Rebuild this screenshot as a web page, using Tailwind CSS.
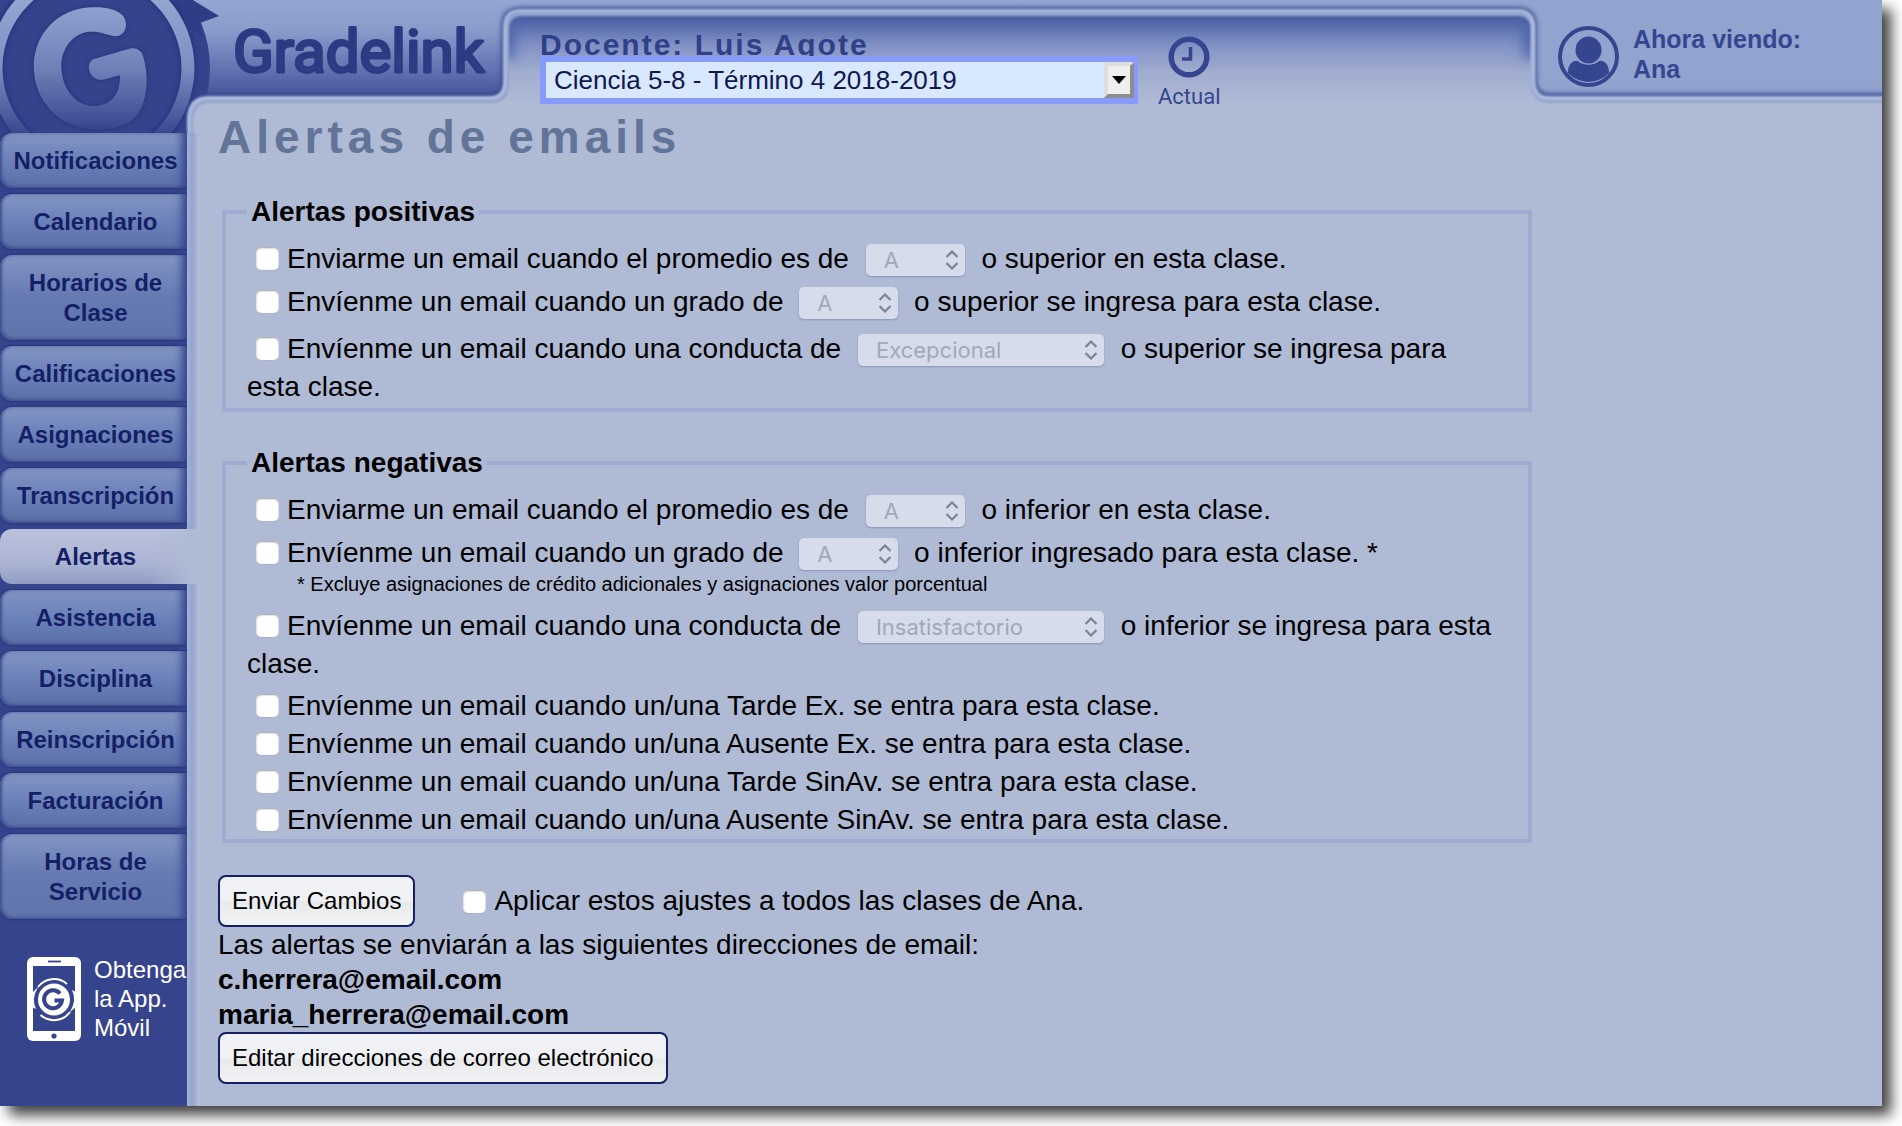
<!DOCTYPE html>
<html lang="es">
<head>
<meta charset="utf-8">
<title>Gradelink - Alertas de emails</title>
<script src="https://cdn.jsdelivr.net/npm/@tailwindcss/browser@4"></script>
</head>
<body class="bg-white font-['Liberation_Sans',Arial,sans-serif] text-black">
<div class="flex min-h-screen pr-5 pb-5">
<div class="relative flex flex-1 flex-col bg-[#afbad5] shadow-[9px_9px_13px_rgba(0,0,0,0.75)]">

  <!-- Header artwork: the left part stretches, the right end is fixed -->
  <div class="pointer-events-none absolute inset-x-0 top-0 z-10 flex h-[133px]" aria-hidden="true">
    <svg class="h-[133px] min-w-0 flex-1">
      <defs>
        <linearGradient id="hd" x1="0" y1="0" x2="0" y2="97" gradientUnits="userSpaceOnUse"><stop offset="0" stop-color="#94a6d1"/><stop offset=".3" stop-color="#8c9ccb"/><stop offset=".7" stop-color="#6473b2"/><stop offset="1" stop-color="#47539a"/></linearGradient>
        <linearGradient id="tab" x1="0" y1="12" x2="0" y2="104" gradientUnits="userSpaceOnUse"><stop offset="0" stop-color="#465c9f"/><stop offset=".1" stop-color="#5065a7"/><stop offset=".35" stop-color="#8090c4"/><stop offset=".65" stop-color="#a0adcf"/><stop offset="1" stop-color="#afbad5"/></linearGradient>
        <linearGradient id="ring" x1="0" y1="0" x2="0" y2="133" gradientUnits="userSpaceOnUse"><stop offset="0" stop-color="#94a6d1"/><stop offset=".5" stop-color="#7d8ec3"/><stop offset="1" stop-color="#3a4890"/></linearGradient>
        <linearGradient id="gl" x1="0" y1="20" x2="0" y2="390" gradientUnits="userSpaceOnUse"><stop offset="0" stop-color="#90a1cf"/><stop offset=".5" stop-color="#7080b8"/><stop offset="1" stop-color="#37458f"/></linearGradient>
        <linearGradient id="wm" x1="0" y1="0" x2="0" y2="1"><stop offset="0" stop-color="#27347c"/><stop offset="1" stop-color="#34438e"/></linearGradient>
        <filter id="b2" x="-20%" y="-20%" width="140%" height="140%"><feGaussianBlur stdDeviation="2.5"/></filter>
        <filter id="b8" filterUnits="userSpaceOnUse" x="-100" y="-60" width="800" height="600"><feGaussianBlur stdDeviation="7"/></filter>
        <filter id="b1" x="-20%" y="-20%" width="140%" height="140%"><feGaussianBlur stdDeviation="1"/></filter>
        <clipPath id="shape"><path d="M0 0H4000V11H520Q505 11 505 27V81Q505 97 490 97H208Q188 97 188 120V133H0Z"/></clipPath>
      </defs>
      <rect x="490" y="11" width="3500" height="93" fill="url(#tab)"/>
      <path d="M506 24V58" stroke="#3c5aa2" stroke-width="16" opacity=".8" filter="url(#b8)"/>
      <rect x="480" y="97" width="24" height="8" fill="#afbad5"/>
      <g clip-path="url(#shape)">
        <rect width="4000" height="97" fill="url(#hd)"/>
        <rect y="97" width="260" height="36" fill="#36448d"/>
        <path d="M4000 11H520Q505 11 505 27V81Q505 97 490 97H208Q188 97 188 120V133" fill="none" stroke="#34458f" stroke-width="7" filter="url(#b2)"/>
        <circle cx="92" cy="68" r="118" fill="#35438d"/>
        <path d="M160-20L219 16L200 23L204 38L176 20Z" fill="#2f3d86"/>
        <circle cx="92" cy="68" r="96" fill="none" stroke="#27357e" stroke-width="17" filter="url(#b2)"/>
        <circle cx="92" cy="68" r="96" fill="none" stroke="url(#ring)" stroke-width="13"/>
        <g transform="scale(.3444 .3333)">
          <path d="M330 108C300 100 285 94 262 95C215 97 182 140 178 190C176 260 215 318 272 318C322 316 350 285 348 226L295 240C262 242 245 195 270 178L375 146C400 140 412 155 416 170C436 240 425 310 395 350C370 380 320 390 272 388C170 385 97 300 98 195C100 100 170 25 265 22C300 20 335 25 355 45C378 72 362 114 330 108Z" fill="#212e72" filter="url(#b8)"/>
          <path d="M330 108C300 100 285 94 262 95C215 97 182 140 178 190C176 260 215 318 272 318C322 316 350 285 348 226L295 240C262 242 245 195 270 178L375 146C400 140 412 155 416 170C436 240 425 310 395 350C370 380 320 390 272 388C170 385 97 300 98 195C100 100 170 25 265 22C300 20 335 25 355 45C378 72 362 114 330 108Z" fill="url(#gl)"/>
        </g>
      </g>
      <text x="233" y="72" font-family="Roboto, sans-serif" font-size="60" font-weight="400" fill="url(#wm)" stroke="#2c3a83" stroke-width="3" stroke-linejoin="round">Gradelink</text>
      <path d="M4000 11H520Q505 11 505 27V81Q505 98 490 98H208Q189 98 189 120V133" fill="none" stroke="#93a4cd" stroke-width="4" filter="url(#b1)" transform="translate(2 3)"/>
      <path d="M4000 11H520Q505 11 505 27V81Q505 98 490 98H208Q189 98 189 120V133" fill="none" stroke="#a9b8db" stroke-width="4" filter="url(#b1)"/>
    </svg>
    <svg class="h-[133px] w-[409px] shrink-0" viewBox="0 0 409 133">
      <defs><clipPath id="rs"><path d="M-200 0H409V97H76Q60 97 60 79V27Q60 11 45 11H-200Z"/></clipPath></defs>
      <rect x="-10" y="11" width="86" height="93" fill="url(#tab)"/>
      <path d="M59 24V58" stroke="#3c5aa2" stroke-width="16" opacity=".8" filter="url(#b8)"/>
      <g clip-path="url(#rs)">
        <rect x="-10" width="430" height="97" fill="url(#hd)"/>
        <rect x="45" width="374" height="97" fill="#92a3cf"/>
        <path d="M-200 11H45Q60 11 60 27V79Q60 97 76 97H600" fill="none" stroke="#34458f" stroke-width="7" filter="url(#b2)"/>
      </g>
      <path d="M-200 11H45Q60 11 60 27V79Q60 98 76 98H600" fill="none" stroke="#93a4cd" stroke-width="4" filter="url(#b1)" transform="translate(0 3)"/>
      <path d="M-200 11H45Q60 11 60 27V79Q60 98 76 98H600" fill="none" stroke="#a9b8db" stroke-width="4" filter="url(#b1)"/>
    </svg>
  </div>

  <header class="relative z-20 flex h-[104px]">
    <div class="w-[540px] shrink-0"></div>
    <div class="w-[598px] pt-7">
      <div class="h-7 overflow-hidden text-[30px] leading-[34px] font-bold tracking-[2px] text-[#2f3f88]"><label for="clase">Docente: Luis Agote</label></div>
      <div class="relative">
        <select id="clase" class="block h-12 w-full appearance-none border-6 border-[#869bfb] bg-[#d8e8ff] pl-2 text-[26px] leading-8 text-[#10184f]"><option>Ciencia 5-8 - Término 4 2018-2019</option></select>
        <span class="pointer-events-none absolute top-1.5 right-1 flex h-9 w-[30px] items-center justify-center border-4 border-t-[#dedede] border-r-[#8e8e8e] border-b-[#8e8e8e] border-l-[#dedede] bg-[#efefef]"><svg class="h-2 w-3.5" viewBox="0 0 14 8"><path d="M0 0H14L7 8Z"/></svg></span>
      </div>
    </div>
    <a href="#" class="ml-5 flex flex-col items-center pt-9 text-[#36458f]">
      <svg class="h-[42px] w-[42px] shrink-0" viewBox="0 0 42 42" fill="none" stroke="currentColor"><circle cx="21" cy="21" r="17.800" stroke-width="5.500"/><path d="M22.500 11V23H14" stroke-width="3.500"/></svg>
      <span class="font-[Roboto] text-[22px] leading-[38px]">Actual</span>
    </a>
    <div class="ml-auto flex w-[324px] gap-3.5 pt-[26px] text-[#36458f]">
      <svg class="h-[61px] w-[61px]" viewBox="0 0 61 61"><circle cx="30.500" cy="30.500" r="28.500" fill="none" stroke="currentColor" stroke-width="4"/><ellipse cx="30.500" cy="24" rx="13" ry="13.500" fill="currentColor"/><path d="M10 47C10 38 15 34 20 35C25 40 36 40 41 35C46 34 51 38 51 47A28 28 0 0 1 10 47Z" fill="currentColor"/></svg>
      <div class="-mt-0.5 text-[25px] leading-[30px] font-bold">Ahora viendo:<br>Ana</div>
    </div>
  </header>

  <div class="flex flex-1">
    <aside class="w-[187px] shrink-0 bg-[#36448d] pt-[29px]">
      <nav class="flex flex-col gap-1.5 text-center text-2xl leading-[30px] font-bold text-[#141f66]">
        <a href="#" class="flex min-h-[55px] items-center justify-center rounded-l-xl bg-linear-to-b from-[#8395c3] via-[#6b81b9] to-[#5a6da6] pl-1 shadow-[inset_-9px_0_8px_-4px_#34448c,inset_2px_-1px_3px_#40508f,0_0_2px_1px_#28357b]">Notificaciones</a>
        <a href="#" class="flex min-h-[55px] items-center justify-center rounded-l-xl bg-linear-to-b from-[#8395c3] via-[#6b81b9] to-[#5a6da6] pl-1 shadow-[inset_-9px_0_8px_-4px_#34448c,inset_2px_-1px_3px_#40508f,0_0_2px_1px_#28357b]">Calendario</a>
        <a href="#" class="flex min-h-[85px] items-center justify-center rounded-l-xl bg-linear-to-b from-[#8395c3] via-[#6579b2] to-[#6074ac] pl-1 shadow-[inset_-9px_0_8px_-4px_#34448c,inset_2px_-1px_3px_#40508f,0_0_2px_1px_#28357b]">Horarios de<br>Clase</a>
        <a href="#" class="flex min-h-[55px] items-center justify-center rounded-l-xl bg-linear-to-b from-[#8395c3] via-[#6b81b9] to-[#5a6da6] pl-1 shadow-[inset_-9px_0_8px_-4px_#34448c,inset_2px_-1px_3px_#40508f,0_0_2px_1px_#28357b]">Calificaciones</a>
        <a href="#" class="flex min-h-[55px] items-center justify-center rounded-l-xl bg-linear-to-b from-[#8395c3] via-[#6b81b9] to-[#5a6da6] pl-1 shadow-[inset_-9px_0_8px_-4px_#34448c,inset_2px_-1px_3px_#40508f,0_0_2px_1px_#28357b]">Asignaciones</a>
        <a href="#" class="flex min-h-[55px] items-center justify-center rounded-l-xl bg-linear-to-b from-[#8395c3] via-[#6b81b9] to-[#5a6da6] pl-1 shadow-[inset_-9px_0_8px_-4px_#34448c,inset_2px_-1px_3px_#40508f,0_0_2px_1px_#28357b]">Transcripción</a>
        <a href="#" aria-current="page" class="relative z-30 -mr-3 flex min-h-[55px] items-center justify-center rounded-l-xl bg-[linear-gradient(90deg,transparent_75%,#afbad5_97%),linear-gradient(180deg,#b9c3dd,#abb5d3_60%,#919dc4)] pr-2">Alertas</a>
        <a href="#" class="flex min-h-[55px] items-center justify-center rounded-l-xl bg-linear-to-b from-[#8395c3] via-[#6b81b9] to-[#5a6da6] pl-1 shadow-[inset_-9px_0_8px_-4px_#34448c,inset_2px_-1px_3px_#40508f,0_0_2px_1px_#28357b]">Asistencia</a>
        <a href="#" class="flex min-h-[55px] items-center justify-center rounded-l-xl bg-linear-to-b from-[#8395c3] via-[#6b81b9] to-[#5a6da6] pl-1 shadow-[inset_-9px_0_8px_-4px_#34448c,inset_2px_-1px_3px_#40508f,0_0_2px_1px_#28357b]">Disciplina</a>
        <a href="#" class="flex min-h-[55px] items-center justify-center rounded-l-xl bg-linear-to-b from-[#8395c3] via-[#6b81b9] to-[#5a6da6] pl-1 shadow-[inset_-9px_0_8px_-4px_#34448c,inset_2px_-1px_3px_#40508f,0_0_2px_1px_#28357b]">Reinscripción</a>
        <a href="#" class="flex min-h-[55px] items-center justify-center rounded-l-xl bg-linear-to-b from-[#8395c3] via-[#6b81b9] to-[#5a6da6] pl-1 shadow-[inset_-9px_0_8px_-4px_#34448c,inset_2px_-1px_3px_#40508f,0_0_2px_1px_#28357b]">Facturación</a>
        <a href="#" class="flex min-h-[85px] items-center justify-center rounded-l-xl bg-linear-to-b from-[#8395c3] via-[#6579b2] to-[#6074ac] pl-1 shadow-[inset_-9px_0_8px_-4px_#34448c,inset_2px_-1px_3px_#40508f,0_0_2px_1px_#28357b]">Horas de<br>Servicio</a>
      </nav>
      <a href="#" class="mt-9 flex items-center gap-[13px] pl-[27px] text-2xl leading-[29px] text-white">
        <svg class="h-[84px] w-[54px] shrink-0" viewBox="0 0 54 84">
          <rect width="54" height="84" rx="6" fill="#fff"/><rect x="6" y="9" width="42" height="65" fill="#36448d"/>
          <path d="M21 4.500H34" stroke="#36448d" stroke-width="1.800"/><circle cx="27" cy="79" r="2.600" fill="#36448d"/>
          <circle cx="27" cy="42.500" r="16" fill="#fff"/>
          <path d="M11 30A20 20 0 0 1 40 27M13.500 58A20 20 0 0 0 43 55" fill="none" stroke="#fff" stroke-width="2"/>
          <path d="M11 30Q4 42 9 52L5 50V36ZM43 55Q50 43 45 33L49 35V50Z" fill="#fff"/>
          <path d="M33 36.500A9 9 0 1 0 35 43.500H27.500" fill="none" stroke="#36448d" stroke-width="4"/>
        </svg>
        <span>Obtenga<br>la App.<br>Móvil</span>
      </a>
    </aside>

    <main class="relative flex-1 bg-[linear-gradient(90deg,#a3b2d8_0,#94a4cc_5px,#9fadd1_8px,transparent_11px)] bg-[position:0_29px] bg-no-repeat px-[31px] pt-[9px] text-[28px] leading-[38px]">
      <h1 class="text-[46px] leading-12 font-bold tracking-[5px] text-[#627497]">Alertas de emails</h1>
      <form>
        <fieldset class="mt-8 ml-1 max-w-[1310px] border-4 border-[#9fabd1] pt-1.5 pr-8 pb-0.5 pl-[21px]">
          <legend class="px-1 text-[28px] font-bold">Alertas positivas</legend>
          <div class="leading-[43px]"><input id="p1" type="checkbox" class="mr-2 ml-[9px] inline-block h-[23px] w-[23px] appearance-none rounded-[5px] bg-white align-[-2px] shadow-[inset_0_1px_2px_#999,0_1px_1px_#9993]"><label for="p1">Enviarme un email cuando el promedio es de</label> <span class="relative mx-[9px] inline-block h-8 w-[99px] align-baseline leading-8"><select disabled aria-label="Promedio mínimo" class="block h-8 w-full appearance-none rounded-[5px] bg-[#d6dcea] px-[18px] font-[Inter] text-[22px] leading-8 text-[#a2a8b8] opacity-100 shadow-[0_1px_2px_#8a95b3]"><option>A</option></select><svg class="absolute top-1.5 right-1.5 h-5 w-3.5" viewBox="0 0 14 20" fill="none" stroke="#7c8393" stroke-width="2.200"><path d="M1.500 7L7 1.500L12.500 7M1.500 13L7 18.500L12.500 13"/></svg></span> o superior en esta clase.</div>
          <div class="leading-[43px]"><input id="p2" type="checkbox" class="mr-2 ml-[9px] inline-block h-[23px] w-[23px] appearance-none rounded-[5px] bg-white align-[-2px] shadow-[inset_0_1px_2px_#999,0_1px_1px_#9993]"><label for="p2">Envíenme un email cuando un grado de</label> <span class="relative mx-2 inline-block h-8 w-[99px] align-baseline leading-8"><select disabled aria-label="Grado mínimo" class="block h-8 w-full appearance-none rounded-[5px] bg-[#d6dcea] px-[18px] font-[Inter] text-[22px] leading-8 text-[#a2a8b8] opacity-100 shadow-[0_1px_2px_#8a95b3]"><option>A</option></select><svg class="absolute top-1.5 right-1.5 h-5 w-3.5" viewBox="0 0 14 20" fill="none" stroke="#7c8393" stroke-width="2.200"><path d="M1.500 7L7 1.500L12.500 7M1.500 13L7 18.500L12.500 13"/></svg></span> o superior se ingresa para esta clase.</div>
          <div class="pt-[7px]"><input id="p3" type="checkbox" class="mr-2 ml-[9px] inline-block h-[23px] w-[23px] appearance-none rounded-[5px] bg-white align-[-2px] shadow-[inset_0_1px_2px_#999,0_1px_1px_#9993]"><label for="p3">Envíenme un email cuando una conducta de</label> <span class="relative mx-[9px] inline-block h-8 w-[246px] align-baseline leading-8"><select disabled aria-label="Conducta mínima" class="block h-8 w-full appearance-none rounded-[5px] bg-[#d6dcea] px-[18px] font-[Inter] text-[22px] leading-8 text-[#a2a8b8] opacity-100 shadow-[0_1px_2px_#8a95b3]"><option>Excepcional</option></select><svg class="absolute top-1.5 right-1.5 h-5 w-3.5" viewBox="0 0 14 20" fill="none" stroke="#7c8393" stroke-width="2.200"><path d="M1.500 7L7 1.500L12.500 7M1.500 13L7 18.500L12.500 13"/></svg></span> o superior se ingresa para esta clase.</div>
        </fieldset>

        <fieldset class="mt-8 ml-1 max-w-[1310px] border-4 border-[#9fabd1] pt-1.5 pr-8 pl-[21px]">
          <legend class="px-1 text-[28px] font-bold">Alertas negativas</legend>
          <div class="leading-[43px]"><input id="n1" type="checkbox" class="mr-2 ml-[9px] inline-block h-[23px] w-[23px] appearance-none rounded-[5px] bg-white align-[-2px] shadow-[inset_0_1px_2px_#999,0_1px_1px_#9993]"><label for="n1">Enviarme un email cuando el promedio es de</label> <span class="relative mx-[9px] inline-block h-8 w-[99px] align-baseline leading-8"><select disabled aria-label="Promedio máximo" class="block h-8 w-full appearance-none rounded-[5px] bg-[#d6dcea] px-[18px] font-[Inter] text-[22px] leading-8 text-[#a2a8b8] opacity-100 shadow-[0_1px_2px_#8a95b3]"><option>A</option></select><svg class="absolute top-1.5 right-1.5 h-5 w-3.5" viewBox="0 0 14 20" fill="none" stroke="#7c8393" stroke-width="2.200"><path d="M1.500 7L7 1.500L12.500 7M1.500 13L7 18.500L12.500 13"/></svg></span> o inferior en esta clase.</div>
          <div class="leading-[43px]"><input id="n2" type="checkbox" class="mr-2 ml-[9px] inline-block h-[23px] w-[23px] appearance-none rounded-[5px] bg-white align-[-2px] shadow-[inset_0_1px_2px_#999,0_1px_1px_#9993]"><label for="n2">Envíenme un email cuando un grado de</label> <span class="relative mx-2 inline-block h-8 w-[99px] align-baseline leading-8"><select disabled aria-label="Grado máximo" class="block h-8 w-full appearance-none rounded-[5px] bg-[#d6dcea] px-[18px] font-[Inter] text-[22px] leading-8 text-[#a2a8b8] opacity-100 shadow-[0_1px_2px_#8a95b3]"><option>A</option></select><svg class="absolute top-1.5 right-1.5 h-5 w-3.5" viewBox="0 0 14 20" fill="none" stroke="#7c8393" stroke-width="2.200"><path d="M1.500 7L7 1.500L12.500 7M1.500 13L7 18.500L12.500 13"/></svg></span> o inferior ingresado para esta clase. *</div>
          <p class="pb-1.5 pl-[50px] text-[20px] leading-5">* Excluye asignaciones de crédito adicionales y asignaciones valor porcentual</p>
          <div class="pt-[7px] pb-1"><input id="n3" type="checkbox" class="mr-2 ml-[9px] inline-block h-[23px] w-[23px] appearance-none rounded-[5px] bg-white align-[-2px] shadow-[inset_0_1px_2px_#999,0_1px_1px_#9993]"><label for="n3">Envíenme un email cuando una conducta de</label> <span class="relative mx-[9px] inline-block h-8 w-[246px] align-baseline leading-8"><select disabled aria-label="Conducta máxima" class="block h-8 w-full appearance-none rounded-[5px] bg-[#d6dcea] px-[18px] font-[Inter] text-[22px] leading-8 text-[#a2a8b8] opacity-100 shadow-[0_1px_2px_#8a95b3]"><option>Insatisfactorio</option></select><svg class="absolute top-1.5 right-1.5 h-5 w-3.5" viewBox="0 0 14 20" fill="none" stroke="#7c8393" stroke-width="2.200"><path d="M1.500 7L7 1.500L12.500 7M1.500 13L7 18.500L12.500 13"/></svg></span> o inferior se ingresa para esta clase.</div>
          <div><input id="n4" type="checkbox" class="mr-2 ml-[9px] inline-block h-[23px] w-[23px] appearance-none rounded-[5px] bg-white align-[-2px] shadow-[inset_0_1px_2px_#999,0_1px_1px_#9993]"><label for="n4">Envíenme un email cuando un/una Tarde Ex. se entra para esta clase.</label></div>
          <div><input id="n5" type="checkbox" class="mr-2 ml-[9px] inline-block h-[23px] w-[23px] appearance-none rounded-[5px] bg-white align-[-2px] shadow-[inset_0_1px_2px_#999,0_1px_1px_#9993]"><label for="n5">Envíenme un email cuando un/una Ausente Ex. se entra para esta clase.</label></div>
          <div><input id="n6" type="checkbox" class="mr-2 ml-[9px] inline-block h-[23px] w-[23px] appearance-none rounded-[5px] bg-white align-[-2px] shadow-[inset_0_1px_2px_#999,0_1px_1px_#9993]"><label for="n6">Envíenme un email cuando un/una Tarde SinAv. se entra para esta clase.</label></div>
          <div><input id="n7" type="checkbox" class="mr-2 ml-[9px] inline-block h-[23px] w-[23px] appearance-none rounded-[5px] bg-white align-[-2px] shadow-[inset_0_1px_2px_#999,0_1px_1px_#9993]"><label for="n7">Envíenme un email cuando un/una Ausente SinAv. se entra para esta clase.</label></div>
        </fieldset>

        <div class="mt-8 flex items-center">
          <button type="submit" class="h-[52px] rounded-lg border-2 border-[#141f66] bg-[linear-gradient(180deg,#f0f1f4_50%,#e8e9eb_52%,#f2f3f4)] px-3 text-2xl">Enviar Cambios</button>
          <input id="all" type="checkbox" class="mr-2 ml-12 inline-block h-[23px] w-[23px] appearance-none rounded-[5px] bg-white shadow-[inset_0_1px_2px_#999,0_1px_1px_#9993]"><label for="all">Aplicar estos ajustes a todos las clases de Ana.</label>
        </div>
        <p class="leading-[35px]">Las alertas se enviarán a las siguientes direcciones de email:</p>
        <p class="leading-[35px] font-bold">c.herrera@email.com</p>
        <p class="leading-[35px] font-bold">maria_herrera@email.com</p>
        <button type="button" class="block h-[52px] rounded-lg border-2 border-[#141f66] bg-[linear-gradient(180deg,#f0f1f4_50%,#e8e9eb_52%,#f2f3f4)] px-3 text-2xl">Editar direcciones de correo electrónico</button>
      </form>
    </main>
  </div>
</div>
</div>
</body>
</html>
